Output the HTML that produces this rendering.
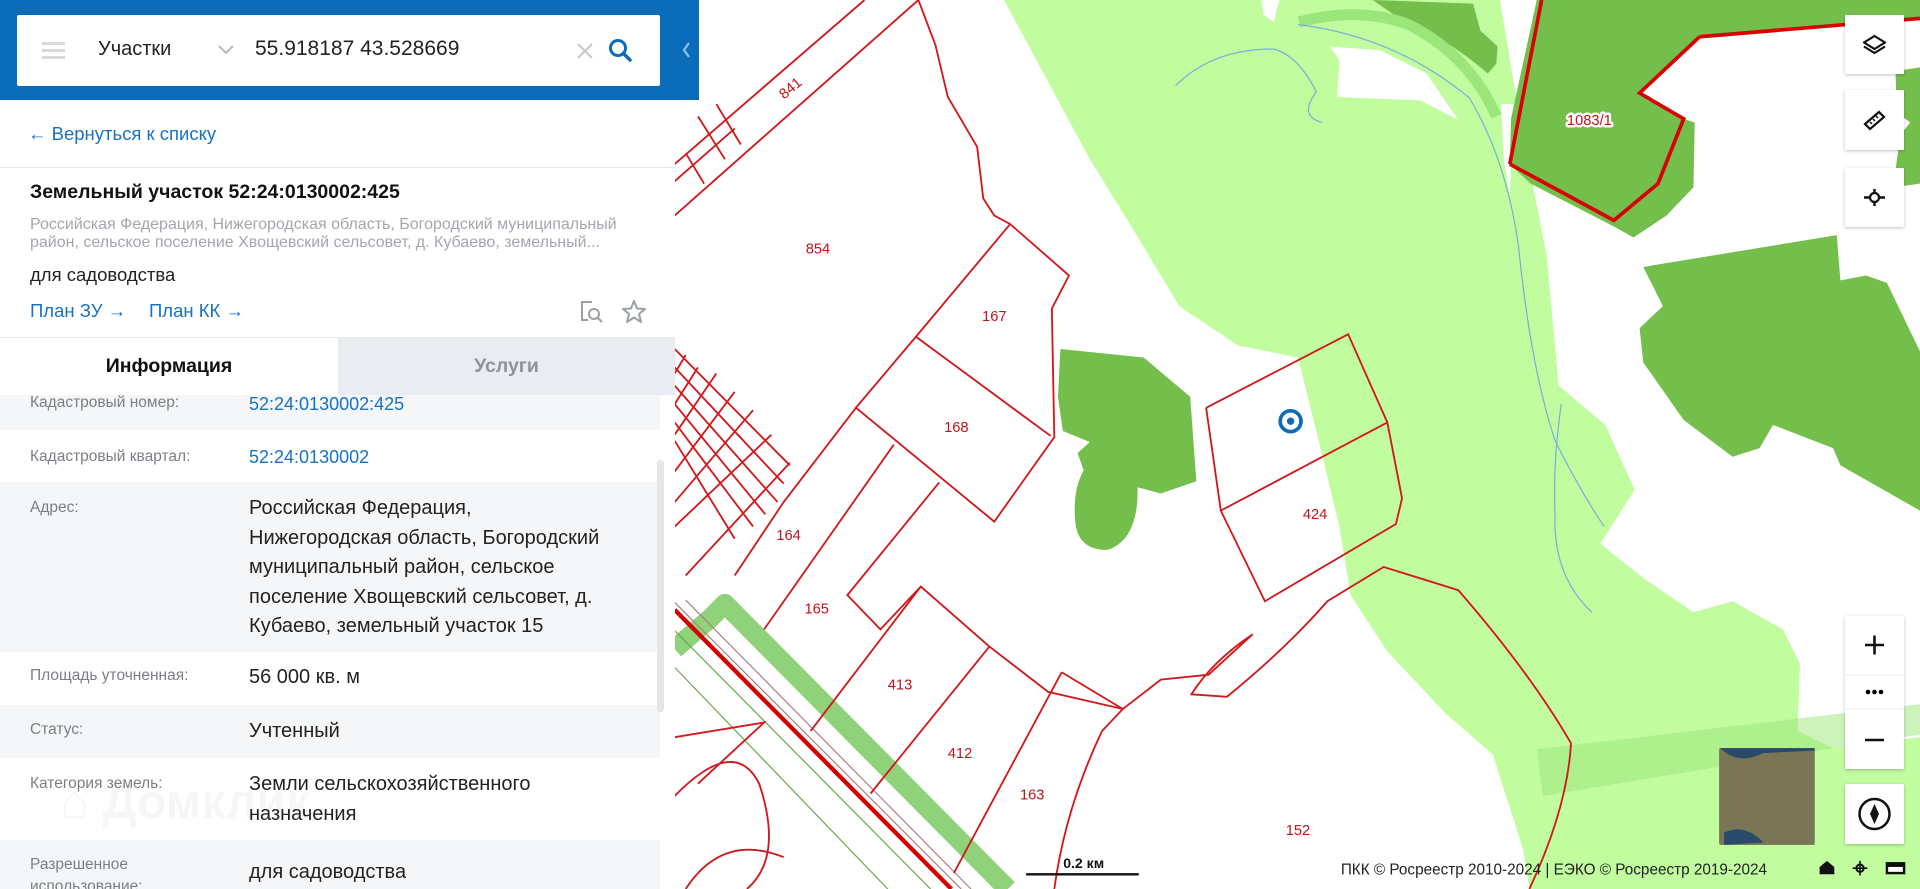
<!DOCTYPE html>
<html><head><meta charset="utf-8">
<style>
*{margin:0;padding:0;box-sizing:border-box}
body{width:1920px;height:889px;overflow:hidden;position:relative;background:#fff;font-family:"Liberation Sans","DejaVu Sans",sans-serif}
#map{position:absolute;left:0;top:0;width:1920px;height:889px}
#panel{position:absolute;left:0;top:0;width:675px;height:889px;background:#fff;overflow:hidden}
.hdr{position:absolute;left:0;top:0;width:675px;height:100px;background:#0a6cb8}
.search{position:absolute;left:17px;top:15px;width:643px;height:71px;background:#fff;border-radius:2px}
.ham{position:absolute;left:25px;top:27px;width:23px;height:17px}
.ham i{display:block;height:3px;background:#d8d8d8;margin-bottom:4px}
.t{position:absolute;white-space:nowrap}
.lnk{color:#1673c2}
.row{position:absolute;left:0;width:660px}
.g{background:#f5f6f8}
.lab{position:absolute;left:30px;font-size:15.5px;color:#7b7f85;line-height:22px}
.val{position:absolute;left:249px;font-size:19.5px;color:#222;line-height:29.5px}
.btn{position:absolute;left:1845px;width:59px;background:#fff;box-shadow:0 1px 3px rgba(0,0,0,.25)}
</style></head><body>
<svg id="map" viewBox="0 0 1568 726" preserveAspectRatio="none" xmlns="http://www.w3.org/2000/svg">
<rect width="1568" height="726" fill="#fff"/>
<!-- light green -->
<path fill="#c1fc9f" d="M820,0 L1225,0 L1240,90 L1263,208 L1273,315 L1311,347 L1335,400 L1307,444 L1342,472 L1383,500 L1415,491 L1456,514 L1470,542 L1468,597 L1497,611 L1568,602 L1568,726 L1249,726 L1244,694 L1219,616 L1181,583 L1133,532 L1103,486 L1094,431 L1075,352 L1060,292 L1011,282 L963,250 L924,185 L890,130 Z"/>
<path fill="#74bf4c" d="M1121,0 L1203,3 L1209,25 L1223,38 L1222,52 L1215,60 Q1180,30 1150,20 Z"/>
<path fill="none" stroke="#9be67a" stroke-width="9" d="M1061,18 Q1110,5 1150,20 Q1200,45 1222,95"/>
<path fill="#fff" d="M1086,38 L1127,41 L1165,60 L1191,98 L1160,82 L1108,80 L1092,79 L1094,49 Z"/>
<path fill="#fff" d="M1226,85 L1236,85 L1233,160 L1228,130Z"/>
<path fill="#fff" d="M1030,0 L1045,0 L1040,18 L1032,12Z"/>
<path fill="#9be67a" d="M1255,612 L1568,575 L1568,600 L1497,611 L1260,650Z" opacity=".5"/>
<!-- dark green -->
<path fill="#74bf4c" d="M1255,0 L1568,0 L1568,15 L1388,30 L1339,76 L1375,97 L1384,100 L1383,153 L1361,176 L1334,194 L1318,185 L1250,150 L1233,134 L1234,97 Z"/>
<path fill="#74bf4c" d="M1548,58 L1568,55 L1568,150 L1546,153 L1552,110 L1560,100 L1549,92Z"/>
<path fill="#74bf4c" d="M1342,218 L1500,192 L1503,229 L1524,225 L1541,231 L1568,287 L1568,417 L1503,380 L1497,366 L1448,347 L1437,366 L1415,373 L1375,343 L1342,296 L1339,268 L1358,250 Z"/>
<path fill="#74bf4c" d="M866,285 L934,292 L972,324 L977,393 L948,403 L929,398 Q930,440 905,449 Q880,450 878,425 Q876,400 885,384 L880,370 L890,361 L868,352 L864,324 Z"/>
<!-- river -->
<path fill="none" stroke="#7ab0d8" stroke-width="1" d="M960,70 Q990,40 1040,40 Q1060,45 1075,75 Q1060,95 1080,100 M1060,20 Q1140,30 1200,80 Q1230,130 1240,200 Q1250,300 1270,360 Q1290,400 1310,430 M1275,330 Q1268,380 1270,420 Q1268,470 1300,500"/>
<!-- road -->
<path fill="none" stroke="#8fd27a" stroke-width="16" stroke-linejoin="round" d="M551,530 L580,505 L592,493 L823,726"/>
<path fill="none" stroke="#6aa84f" stroke-width="1" d="M551,515 L760,726 M551,545 L725,726"/>
<path fill="none" stroke="#d50000" stroke-width="3.5" d="M551,498 L777,726"/>
<path fill="none" stroke="#b08080" stroke-width="1" d="M551,492 L785,726 M560,490 L793,726"/>
<!-- red lines -->
<g fill="none" stroke="#d0191d" stroke-width="1.5">
<path d="M551,134 L706,0 M551,176 L750,0 M551,148 L600,105 M570,95 L592,130 M585,85 L605,118 M560,125 L575,150"/>
<path d="M750,0 L764,37 L774,79 L798,120 L803,162 L812,176 L825,183 L873,225 L859,252 L861,357 L812,426 L699,333 L748,275 L825,183"/>
<path d="M748,275 L858,356 M730,363 L624,514 M767,394 L692,486 L719,514 L752,479 L808,528 L856,565 L917,579 M752,479 L662,597 M808,528 L711,648 M867,549 L779,713 M917,579 L900,597 Q870,660 861,726 M699,333 L640,410 L600,470"/>
<path d="M867,549 L917,579 L948,555 L987,551 Q1010,530 1023,518 Q990,540 973,567 L1002,569 Q1050,530 1084,491 L1130,463 L1191,482 Q1250,550 1283,607 Q1280,660 1249,726"/>
<path d="M985,333 L1101,273 L1133,345 L1145,407 L1140,428 L1033,491 L997,417 L985,333 M997,417 L1133,345"/>
<path d="M551,602 L624,590 L570,640 M551,650 Q600,600 620,640 Q640,700 610,726 M560,726 Q590,680 640,700"/>
<path d="M551,285 L645,380 M551,300 L640,395 M551,315 L635,410 M551,330 L625,420 M551,345 L615,430 M551,360 L600,440 M560,290 L551,305 M570,300 L551,330 M585,305 L551,355 M600,320 L551,385 M615,335 L551,410 M630,355 L551,430 M645,378 L560,470"/>
<path d="M1233,134 L1259,0 M1388,30 L1568,15 M1233,134 L1318,180 L1354,150 L1375,97 L1339,76 L1388,30" stroke-width="3" stroke="#d80000"/>
</g>
<!-- labels -->
<g font-family="Liberation Sans,sans-serif" font-size="12" fill="#c0141a" stroke="#fff" stroke-width="4" stroke-linejoin="round" paint-order="stroke" text-anchor="middle">
<text x="668" y="207">854</text><text x="812" y="262">167</text><text x="781" y="353">168</text>
<text x="644" y="441">164</text><text x="667" y="501">165</text><text x="735" y="563">413</text>
<text x="784" y="619">412</text><text x="843" y="653">163</text><text x="1074" y="424">424</text>
<text x="1060" y="682">152</text><text x="1298" y="102">1083/1</text>
<text x="648" y="75" transform="rotate(-40 648 75)">841</text>
</g>
<circle cx="1054" cy="344" r="8.5" fill="#fff" stroke="#0a6cb8" stroke-width="3"/>
<circle cx="1054" cy="344" r="3" fill="#0a6cb8"/>
<line x1="838" y1="714" x2="930" y2="714" stroke="#111" stroke-width="2"/>
<text x="885" y="709" font-family="Liberation Sans,sans-serif" font-size="11.5" font-weight="bold" text-anchor="middle" fill="#111">0.2 км</text>
<text x="1095" y="714" font-family="Liberation Sans,sans-serif" font-size="12.5" fill="#222">ПКК © Росреестр 2010-2024 | ЕЭКО © Росреестр 2019-2024</text>
<path d="M1486,714 L1486,708 L1492,703 L1498,708 L1498,714 Z" fill="#111"/>
<circle cx="1519" cy="709" r="3" fill="none" stroke="#111" stroke-width="1.6"/><path d="M1513,709h12M1519,703v12" stroke="#111" stroke-width="1.3"/>
<rect x="1540" y="704" width="16" height="10" fill="#111"/><rect x="1542" y="708" width="12" height="4" fill="#fff"/>
<rect x="1404" y="611" width="78" height="79" rx="2" fill="#6b6a4a"/>
<rect x="1404" y="611" width="78" height="79" fill="#847f5e" opacity=".6"/>
<path d="M1406,612 Q1420,625 1440,615 L1482,613 L1482,611 L1404,611Z M1408,680 Q1425,672 1440,688 L1408,690Z" fill="#2a4a6a"/>
</svg>

<div class="btn" style="top:15px;height:59px"><svg width="59" height="59"><path d="M29.5,21 L40,27.5 L29.5,34 L19,27.5Z M19,31.5 L29.5,38 L40,31.5" fill="none" stroke="#111" stroke-width="2.2" stroke-linejoin="round"/></svg></div>
<div class="btn" style="top:90px;height:60px"><svg width="59" height="60"><path d="M20,34 L34,22 L39,27 L25,39Z" fill="none" stroke="#111" stroke-width="2.2"/><path d="M28,29l2,2M31,26l2,2M25,32l2,2" stroke="#111" stroke-width="1.5"/></svg></div>
<div class="btn" style="top:168px;height:59px"><svg width="59" height="59"><circle cx="29.5" cy="29.5" r="4.5" fill="none" stroke="#111" stroke-width="2.2"/><path d="M19,29.5h6M34,29.5h6M29.5,21v4M29.5,34v4" stroke="#111" stroke-width="2.4"/></svg></div>
<div class="btn" style="top:616px;height:153px"><svg width="59" height="153"><path d="M20,29h19M29.5,19.5v19" stroke="#111" stroke-width="2.6"/><line x1="0" y1="59" x2="59" y2="59" stroke="#eee"/><circle cx="23" cy="76" r="2.3"/><circle cx="29.5" cy="76" r="2.3"/><circle cx="36" cy="76" r="2.3"/><line x1="0" y1="93" x2="59" y2="93" stroke="#eee"/><path d="M20,124h19" stroke="#111" stroke-width="2.6"/></svg></div>
<div class="btn" style="top:784px;height:60px"><svg width="59" height="60"><circle cx="29.5" cy="30" r="15" fill="none" stroke="#111" stroke-width="2.5"/><path d="M29.5,20 L34,30 L29.5,40 L25,30Z" fill="#111"/></svg></div>

<div style="position:absolute;left:675px;top:0;width:24px;height:100px;background:#0a6cb8"><svg width="24" height="100"><path d="M14,43 L9,50 L14,57" fill="none" stroke="#8fbfe8" stroke-width="2.2"/></svg></div>

<div id="panel">
 <div class="hdr"></div>
 <div class="search">
  <div class="ham"><i></i><i></i><i></i></div>
  <div class="t" style="left:81px;top:23px;font-size:20px;color:#222">Участки</div>
  <svg style="position:absolute;left:200px;top:28px" width="18" height="14"><path d="M2,3 L9,10 L16,3" fill="none" stroke="#bbb" stroke-width="2"/></svg>
  <div class="t" style="left:238px;top:22px;font-size:21px;color:#222">55.918187 43.528669</div>
  <svg style="position:absolute;left:558px;top:26px" width="20" height="20"><path d="M3,3L17,17M17,3L3,17" stroke="#c8c8c8" stroke-width="2"/></svg>
  <svg style="position:absolute;left:590px;top:22px" width="28" height="28"><circle cx="11" cy="11" r="7.5" fill="none" stroke="#0a6cb8" stroke-width="3"/><path d="M16.5,16.5 L23,23" stroke="#0a6cb8" stroke-width="3.5" stroke-linecap="round"/></svg>
 </div>
 <div class="t lnk" style="left:28px;top:123px;font-size:18.5px">← Вернуться к списку</div>
 <div style="position:absolute;left:0;top:167px;width:675px;height:1px;background:#e6e8eb"></div>
 <div class="t" style="left:30px;top:181px;font-size:19.5px;font-weight:bold;color:#111">Земельный участок 52:24:0130002:425</div>
 <div class="t" style="left:30px;top:216px;font-size:16px;color:#a3a7ad;line-height:18px">Российская Федерация, Нижегородская область, Богородский муниципальный<br>район, сельское поселение Хвощевский сельсовет, д. Кубаево, земельный...</div>
 <div class="t" style="left:30px;top:264px;font-size:18.5px;color:#222">для садоводства</div>
 <div class="t lnk" style="left:30px;top:300px;font-size:18.5px">План ЗУ →</div>
 <div class="t lnk" style="left:149px;top:300px;font-size:18.5px">План КК →</div>
 <svg style="position:absolute;left:578px;top:298px" width="28" height="28"><path d="M14,4H4V22H10" fill="none" stroke="#9aa0a6" stroke-width="2"/><circle cx="16" cy="16" r="5" fill="none" stroke="#9aa0a6" stroke-width="2"/><path d="M20,20L24,24" stroke="#9aa0a6" stroke-width="2.2"/></svg>
 <svg style="position:absolute;left:620px;top:298px" width="28" height="28"><path d="M14,3 L17,10.5 L25,11 L19,16 L21,24 L14,19.5 L7,24 L9,16 L3,11 L11,10.5Z" fill="none" stroke="#9aa0a6" stroke-width="2" stroke-linejoin="round"/></svg>
 <div style="position:absolute;left:0;top:337px;width:675px;height:1px;background:#e6e8eb"></div>
 <div style="position:absolute;left:338px;top:338px;width:337px;height:57px;background:#e9ecf0"></div>
 <div class="t" style="left:0;width:338px;text-align:center;top:355px;font-size:19.5px;font-weight:bold;color:#111">Информация</div>
 <div class="t" style="left:338px;width:337px;text-align:center;top:355px;font-size:19.5px;font-weight:bold;color:#8e9399">Услуги</div>

 <div class="row g" style="top:395px;height:35px"></div>
 <div class="lab" style="top:392px">Кадастровый номер:</div>
 <div class="val lnk" style="top:390px;font-size:18px;color:#1673c2">52:24:0130002:425</div>
 <div class="row" style="top:430px;height:52px"></div>
 <div class="lab" style="top:446px">Кадастровый квартал:</div>
 <div class="val" style="top:443px;font-size:18px;color:#1673c2">52:24:0130002</div>
 <div class="row g" style="top:482px;height:170px"></div>
 <div class="lab" style="top:497px">Адрес:</div>
 <div class="val" style="top:494px;font-size:20px">Российская Федерация,<br>Нижегородская область, Богородский<br>муниципальный район, сельское<br>поселение Хвощевский сельсовет, д.<br>Кубаево, земельный участок 15</div>
 <div class="row" style="top:652px;height:53px"></div>
 <div class="lab" style="top:665px">Площадь уточненная:</div>
 <div class="val" style="top:663px;font-size:20px">56 000 кв. м</div>
 <div class="row g" style="top:705px;height:53px"></div>
 <div class="lab" style="top:719px">Статус:</div>
 <div class="val" style="top:717px;font-size:20px">Учтенный</div>
 <div class="row" style="top:758px;height:82px"></div>
 <div class="lab" style="top:773px">Категория земель:</div>
 <div class="val" style="top:770px;font-size:20px">Земли сельскохозяйственного<br>назначения</div>
 <div class="t" style="left:60px;top:775px;font-size:48px;color:rgba(0,0,0,.035);font-weight:bold">⌂ Домклик</div>
 <div class="row g" style="top:840px;height:49px"></div>
 <div class="lab" style="top:854px">Разрешенное<br>использование:</div>
 <div class="val" style="top:858px;font-size:20px">для садоводства</div>
 <div style="position:absolute;left:657px;top:460px;width:7px;height:252px;background:#e4e6ea;border-radius:3px"></div>
</div>
</body></html>
